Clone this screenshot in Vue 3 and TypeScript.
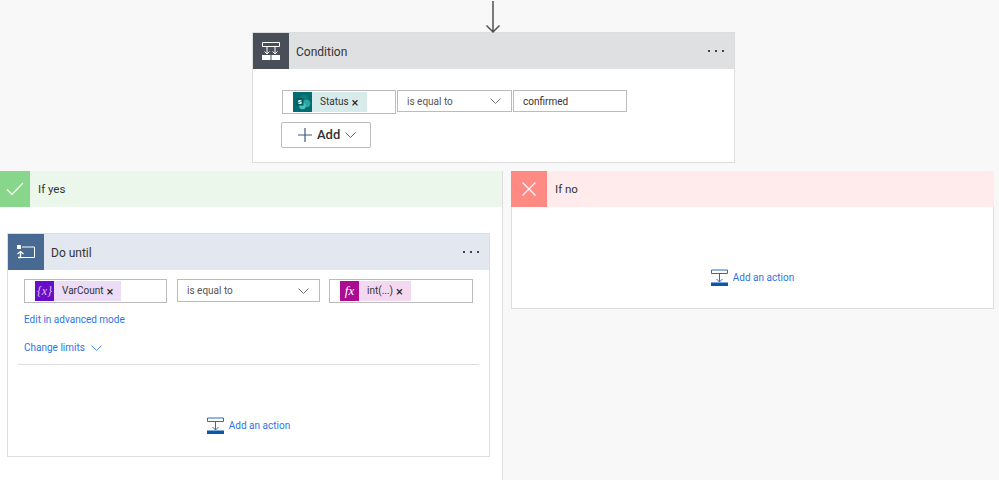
<template>
	<div class="page">
		<section class="card card--condition">
			<svg class="arrow" width="16" height="33" viewBox="0 0 16 33">
				<path d="M8 0V31M1.500 24.500L8 31L14.500 24.500" fill="none" stroke="#505050" stroke-width="1.500" />
			</svg>
			<header class="card__head card__head--condition">
				<div class="card__icon card__icon--condition">
					<svg width="18" height="18" viewBox="0 0 18 18">
						<path d="M.5.500H17.500V4.500H.5ZM5 4.500V12M13 4.500V12M2.500 9.500L5 12L7.500 9.500M10.500 9.500L13 12L15.500 9.500" fill="none" stroke="#fff" />
						<path d="M0 13H8.500V18H0ZM9.500 13H18V18H9.500Z" fill="#fff" />
					</svg>
				</div>
				<span class="card__title">Condition</span>
				<span class="dots"><i /><i /><i /></span>
			</header>
			<div class="condition-body">
				<div class="row">
					<div class="field field--status">
						<span class="token token--status">
							<span class="token__icon token__icon--status">
								<svg width="18" height="18" viewBox="0 0 18 18">
									<circle cx="10" cy="6.500" r="4.500" fill="#0b7c7e" />
									<circle cx="12.500" cy="10.500" r="3.800" fill="#2fa5a0" />
									<circle cx="8.500" cy="13" r="3.300" fill="#48c2bd" />
									<rect x="2" y="5" width="7.500" height="7.500" fill="#035b5e" />
									<text x="3.700" y="11" class="sp-letter">s</text>
								</svg>
							</span>
							<span class="token__label">Status</span>
							<span class="token__close">×</span>
						</span>
					</div>
					<div class="field field--select field--select-condition">
						<span>is equal to</span>
						<svg class="chevron" width="11" height="6" viewBox="0 0 11 6"><path d="M.5.500L5.500 5.500L10.500.500" fill="none" stroke="#777" /></svg>
					</div>
					<div class="field field--text">confirmed</div>
				</div>
				<button class="add-button" type="button">
					<svg width="14" height="14" viewBox="0 0 14 14"><path d="M7 0V14M0 7H14" stroke="#3f5a78" stroke-width="1.200" /></svg>
					<span>Add</span>
					<svg width="11" height="6" viewBox="0 0 11 6"><path d="M.5.500L5.500 5.500L10.500.500" fill="none" stroke="#666" /></svg>
				</button>
			</div>
		</section>

		<div class="branches">
			<div class="branch branch--yes">
				<header class="branch__head branch__head--yes">
					<div class="branch__icon branch__icon--yes">
						<svg width="18" height="14" viewBox="0 0 18 14"><path d="M1 7.500L6 12.500L17 1" fill="none" stroke="#fff" stroke-width="1.200" /></svg>
					</div>
					<span class="branch__title">If yes</span>
				</header>
				<div class="branch__body">
					<section class="card card--until">
						<header class="card__head card__head--until">
							<div class="card__icon card__icon--until">
								<svg width="18" height="14" viewBox="0 0 18 14">
									<path d="M5 2H17.500V12.500H3.500" fill="none" stroke="#fff" />
									<rect x="0" y="0" width="4" height="4" fill="#fff" />
									<path d="M3.500 7V12.500H1M.5 9L3.500 6.500L6.500 9" fill="none" stroke="#fff" stroke-width="1.300" />
								</svg>
							</div>
							<span class="card__title">Do until</span>
							<span class="dots"><i /><i /><i /></span>
						</header>
						<div class="until-body">
							<div class="until-fields">
								<div class="field field--token field--var">
									<span class="token token--var">
										<span class="token__icon token__icon--var">{x}</span>
										<span class="token__label">VarCount</span>
										<span class="token__close">×</span>
									</span>
								</div>
								<div class="field field--select">
									<span>is equal to</span>
									<svg class="chevron" width="11" height="6" viewBox="0 0 11 6"><path d="M.5.500L5.500 5.500L10.500.500" fill="none" stroke="#777" /></svg>
								</div>
								<div class="field field--token">
									<span class="token token--fx">
										<span class="token__icon token__icon--fx">fx</span>
										<span class="token__label">int(...)</span>
										<span class="token__close">×</span>
									</span>
								</div>
							</div>
							<a class="link link--advanced">Edit in advanced mode</a>
							<a class="link link--limits">
								Change limits
								<svg width="11" height="6" viewBox="0 0 11 6"><path d="M.5.500L5.500 5.500L10.500.500" fill="none" stroke="#4a86e8" /></svg>
							</a>
							<div class="divider" />
							<div class="add-action add-action--until">
								<svg class="add-action__icon" width="17" height="17" viewBox="0 0 17 17">
									<path d="M.5 1H16.500V4.500H.5ZM8.500 4.500V13M5.500 10L8.500 13L11.500 10" fill="none" stroke="#2b6cb8" />
									<rect x="0" y="13.500" width="17" height="3.500" fill="#0b57a8" />
								</svg>
								<a class="link">Add an action</a>
							</div>
						</div>
					</section>
				</div>
			</div>
			<div class="branch branch--no">
				<header class="branch__head branch__head--no">
					<div class="branch__icon branch__icon--no">
						<svg width="14" height="14" viewBox="0 0 14 14"><path d="M.5.500L13.500 13.500M13.500.500L.5 13.500" stroke="#fff" stroke-width="1.100" /></svg>
					</div>
					<span class="branch__title">If no</span>
				</header>
				<div class="no-body">
					<div class="add-action">
						<svg class="add-action__icon" width="17" height="17" viewBox="0 0 17 17">
							<path d="M.5 1H16.500V4.500H.5ZM8.500 4.500V13M5.500 10L8.500 13L11.500 10" fill="none" stroke="#2b6cb8" />
							<rect x="0" y="13.500" width="17" height="3.500" fill="#0b57a8" />
						</svg>
						<a class="link">Add an action</a>
					</div>
				</div>
			</div>
		</div>
	</div>
</template>

<script setup lang="ts">
</script>

<style>
body {
	background: #f8f8f8;
}
</style>

<style scoped>
.page {
	width: 999px;
	height: 480px;
	overflow: hidden;
	padding-top: 32px;
	box-sizing: border-box;
	background: #f8f8f8;
	font-family: Roboto, "Liberation Sans", sans-serif;
	color: #333;
	font-size: 10px;
}

.card {
	background: #fff;
	border: 1px solid #ddd;
	box-sizing: border-box;
}

.card--condition {
	position: relative;
	width: 483px;
	height: 131px;
	margin-left: 252px;
}

.arrow {
	position: absolute;
	left: 232px;
	top: -32px;
}

.card__head {
	display: flex;
	align-items: center;
	height: 36px;
}

.card__head--condition {
	background: #dfe0e2;
}

.card__head--until {
	background: #e3e7ef;
}

.card__icon {
	display: flex;
	align-items: center;
	justify-content: center;
	flex: none;
	width: 36px;
	height: 36px;
}

.card__icon--condition {
	background: #484f58;
}

.card__icon--until {
	background: #486991;
}

.card__title {
	margin: 1px 0 0 7px;
	font-size: 12px;
	color: #333;
}

.dots {
	display: flex;
	gap: 5px;
	margin-left: auto;
	margin-right: 10px;
}

.dots i {
	width: 2px;
	height: 2px;
	background: #444;
}

.condition-body {
	padding: 21px 0 0 29px;
}

.row {
	display: flex;
	align-items: flex-start;
}

.field {
	display: flex;
	align-items: center;
	box-sizing: border-box;
	background: #fff;
	border: 1px solid #bbb;
}

.field--status {
	width: 114px;
	height: 24px;
	padding-left: 10px;
}

.field--select {
	justify-content: space-between;
	width: 143px;
	height: 23px;
	padding: 0 10px 0 9px;
	color: #555;
}

.field--select-condition {
	width: 115px;
	height: 22px;
	margin-left: 1px;
}

.field--text {
	width: 114px;
	height: 22px;
	margin-left: 1px;
	padding-left: 9px;
	color: #333;
}

.field--token {
	width: 144px;
	height: 24px;
	padding-left: 10px;
}

.field--var {
	width: 143px;
	margin-right: 1px;
}

.token {
	display: flex;
	align-items: center;
	height: 20px;
	color: #333;
}

.token--status {
	background: #d8ebeb;
}

.token--var {
	background: #ecdcf6;
}

.token--fx {
	background: #f3d8ef;
}

.token__icon {
	display: flex;
	align-items: center;
	justify-content: center;
	width: 19px;
	height: 20px;
	color: #fff;
}

.token__icon--status {
	background: #036c70;
}

.token__icon--var {
	background: #6a0dca;
	color: #d9c3f2;
	font-family: "Liberation Serif", serif;
	font-style: italic;
	font-size: 12px;
}

.token__icon--fx {
	background: #ac0c91;
	font-family: "Liberation Serif", serif;
	font-style: italic;
	font-size: 13px;
}

.token__label {
	margin: -1px 0 0 8px;
}

.token__close {
	margin: 1px 8px 0 3px;
	font-size: 13px;
	line-height: 1;
	color: #222;
}

.sp-letter {
	font-size: 8px;
	font-weight: 700;
	fill: #fff;
}

.add-button {
	display: flex;
	align-items: center;
	box-sizing: border-box;
	width: 90px;
	height: 26px;
	margin: 8px 0 0 -1px;
	padding: 0 0 1px 16px;
	gap: 5px;
	background: #fff;
	border: 1px solid #bbb;
	border-radius: 2px;
	font-family: inherit;
	font-size: 13px;
	font-weight: 500;
	color: #333;
}

.branches {
	display: flex;
	margin-top: 8px;
}

.branch--yes {
	width: 503px;
	height: 309px;
	box-sizing: border-box;
	border-right: 1px solid #ddd;
	background: #fff;
}

.branch--no {
	width: 483px;
	margin-left: 8px;
	align-self: flex-start;
}

.branch__head {
	display: flex;
	align-items: center;
	height: 36px;
}

.branch__head--yes {
	background: #ecf7ec;
}

.branch__head--no {
	background: #ffebeb;
}

.branch__icon {
	display: flex;
	align-items: center;
	justify-content: center;
	height: 36px;
}

.branch__icon--yes {
	width: 30px;
	background: #88d68b;
}

.branch__icon--no {
	width: 36px;
	background: #ff8a84;
}

.branch__title {
	margin-left: 8px;
	font-size: 11.500px;
	color: #333;
}

.branch__body {
	padding: 26px 0 0 7px;
}

.card--until {
	width: 483px;
	height: 224px;
}

.until-body {
	padding: 9px 10px 0 10px;
}

.until-fields {
	display: flex;
	gap: 9px;
	margin-left: 6px;
}

.link {
	color: #2e73e8;
	font-size: 10px;
}

.link--advanced {
	display: block;
	margin: 10px 0 0 6px;
	line-height: 14px;
}

.link--limits {
	display: flex;
	align-items: center;
	gap: 6px;
	margin: 14px 0 0 6px;
	line-height: 14px;
}

.divider {
	height: 1px;
	margin-top: 9px;
	background: #ddd;
}

.add-action {
	display: flex;
	align-items: center;
	justify-content: center;
	gap: 5px;
}

.add-action--until {
	margin-top: 52px;
}

.no-body {
	display: flex;
	align-items: center;
	justify-content: center;
	box-sizing: border-box;
	height: 102px;
	padding-top: 40px;
	background: #fff;
	border: 1px solid #ddd;
	border-top: none;
}
</style>
